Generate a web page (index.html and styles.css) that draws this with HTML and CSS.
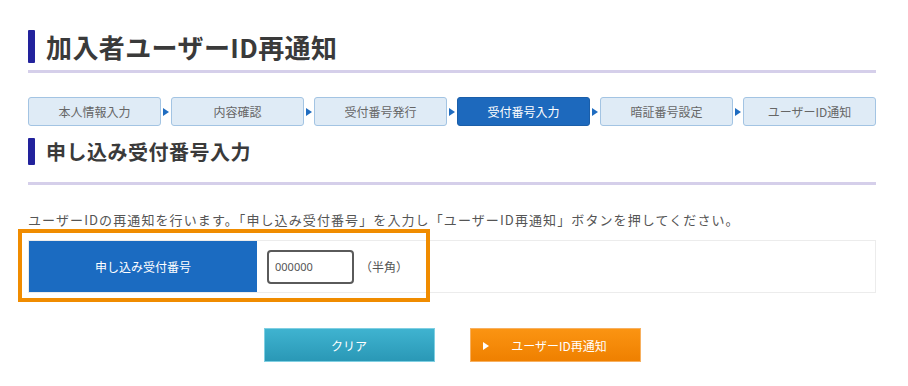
FILE: index.html
```html
<!DOCTYPE html>
<html lang="ja">
<head>
<meta charset="utf-8">
<link rel="stylesheet" href="styles.css">
</head>
<body>
<div class="page">
  <h1 class="title"><span class="bar"></span><span class="title-text">加入者ユーザーID再通知</span></h1>
  <div class="rule"></div>

  <ol class="steps">
    <li class="step">本人情報入力</li>
    <li class="arrow"></li>
    <li class="step">内容確認</li>
    <li class="arrow"></li>
    <li class="step">受付番号発行</li>
    <li class="arrow"></li>
    <li class="step active">受付番号入力</li>
    <li class="arrow"></li>
    <li class="step">暗証番号設定</li>
    <li class="arrow"></li>
    <li class="step">ユーザーID通知</li>
  </ol>

  <h2 class="subtitle"><span class="bar small"></span><span class="subtitle-text">申し込み受付番号入力</span></h2>
  <div class="rule sub"></div>

  <p class="desc">ユーザーIDの再通知を行います。「申し込み受付番号」を入力し「ユーザーID再通知」ボタンを押してください。</p>

  <div class="form">
    <div class="label">申し込み受付番号</div>
    <div class="field">
      <input class="input" type="text" value="000000">
      <span class="note">（半角）</span>
    </div>
    <div class="highlight"></div>
  </div>

  <div class="buttons">
    <button class="btn clear">クリア</button>
    <button class="btn send"><span class="tri"></span><span class="send-text">ユーザーID再通知</span></button>
  </div>
</div>
</body>
</html>
```

FILE: styles.css
```css
html, body {
  margin: 0;
  padding: 0;
  background: #ffffff;
}
body {
  font-family: "Noto Sans CJK JP", "Noto Sans", sans-serif;
  color: #333;
}
.page {
  width: 848px;
  padding: 30px 0 0 28px;
}
.title {
  display: flex;
  align-items: center;
  gap: 11px;
  height: 33px;
  margin: 0;
}
.bar {
  display: block;
  width: 7px;
  height: 33px;
  background: #22229c;
  border-radius: 1px;
}
.bar.small {
  height: 27px;
}
.title-text {
  font-size: 26px;
  font-weight: bold;
  color: #3a3a3a;
  line-height: 33px;
  letter-spacing: 0.4px;
}
.rule {
  margin-top: 7px;
  height: 3px;
  background: #d5cfea;
}
.rule.sub {
  margin-top: 17px;
}
.steps {
  list-style: none;
  margin: 24px 0 0;
  padding: 0;
  display: flex;
  align-items: center;
  height: 29px;
}
.step {
  box-sizing: border-box;
  width: 133px;
  height: 29px;
  border: 1px solid #a3c4e3;
  border-radius: 3px;
  background: #dfebf6;
  color: #666;
  font-size: 12px;
  display: flex;
  align-items: center;
  justify-content: center;
}
.step.active {
  background: #1d69bd;
  border-color: #1a5ea9;
  color: #fff;
}
.arrow {
  width: 10px;
  height: 29px;
  display: flex;
  align-items: center;
  justify-content: center;
}
.arrow::before {
  content: "";
  display: block;
  width: 0;
  height: 0;
  border-top: 4px solid transparent;
  border-bottom: 4px solid transparent;
  border-left: 6px solid #1f6cc0;
}
.subtitle {
  display: flex;
  align-items: center;
  gap: 11px;
  height: 27px;
  margin: 12px 0 0;
}
.subtitle-text {
  font-size: 20px;
  font-weight: bold;
  color: #3a3a3a;
  line-height: 27px;
  letter-spacing: 0.5px;
}
.desc {
  margin: 25px 0 0;
  font-size: 13px;
  line-height: 20px;
  color: #555;
  letter-spacing: 1.1px;
}
.form {
  position: relative;
  margin-top: 10px;
  box-sizing: border-box;
  height: 53px;
  border: 1px solid #ececec;
  display: flex;
}
.label {
  width: 228px;
  background: #1b6bc1;
  color: #fff;
  font-size: 12px;
  display: flex;
  align-items: center;
  justify-content: center;
}
.field {
  display: flex;
  align-items: center;
  padding-left: 10px;
  gap: 6px;
}
.input {
  box-sizing: border-box;
  width: 87px;
  height: 34px;
  border: 2px solid #5a5a5a;
  border-radius: 4px;
  padding: 0 6px;
  font-family: "Noto Sans", sans-serif;
  font-size: 11px;
  color: #555;
  background: #fff;
}
.note {
  font-size: 12px;
  color: #555;
}
.highlight {
  position: absolute;
  left: -11px;
  top: -12px;
  width: 412px;
  height: 73px;
  box-sizing: border-box;
  border: 4px solid #f08c00;
  pointer-events: none;
}
.buttons {
  display: flex;
  justify-content: center;
  gap: 35px;
  margin-top: 35px;
}
.btn {
  width: 171px;
  height: 34px;
  border: none;
  color: #fff;
  font-family: "Noto Sans CJK JP", sans-serif;
  font-size: 12px;
  display: flex;
  align-items: center;
  justify-content: center;
  position: relative;
  padding: 0;
}
.clear {
  background: linear-gradient(#3fb3d0, #2a98b6);
  border: 1px solid #7fcfe2;
}
.send {
  background: linear-gradient(#fb9412, #ef8000);
  border: 1px solid #f7b060;
}
.tri {
  position: absolute;
  left: 12px;
  top: 13px;
  width: 0;
  height: 0;
  border-top: 4px solid transparent;
  border-bottom: 4px solid transparent;
  border-left: 6px solid #fff;
}
.send-text {
  padding-left: 8px;
}
```
